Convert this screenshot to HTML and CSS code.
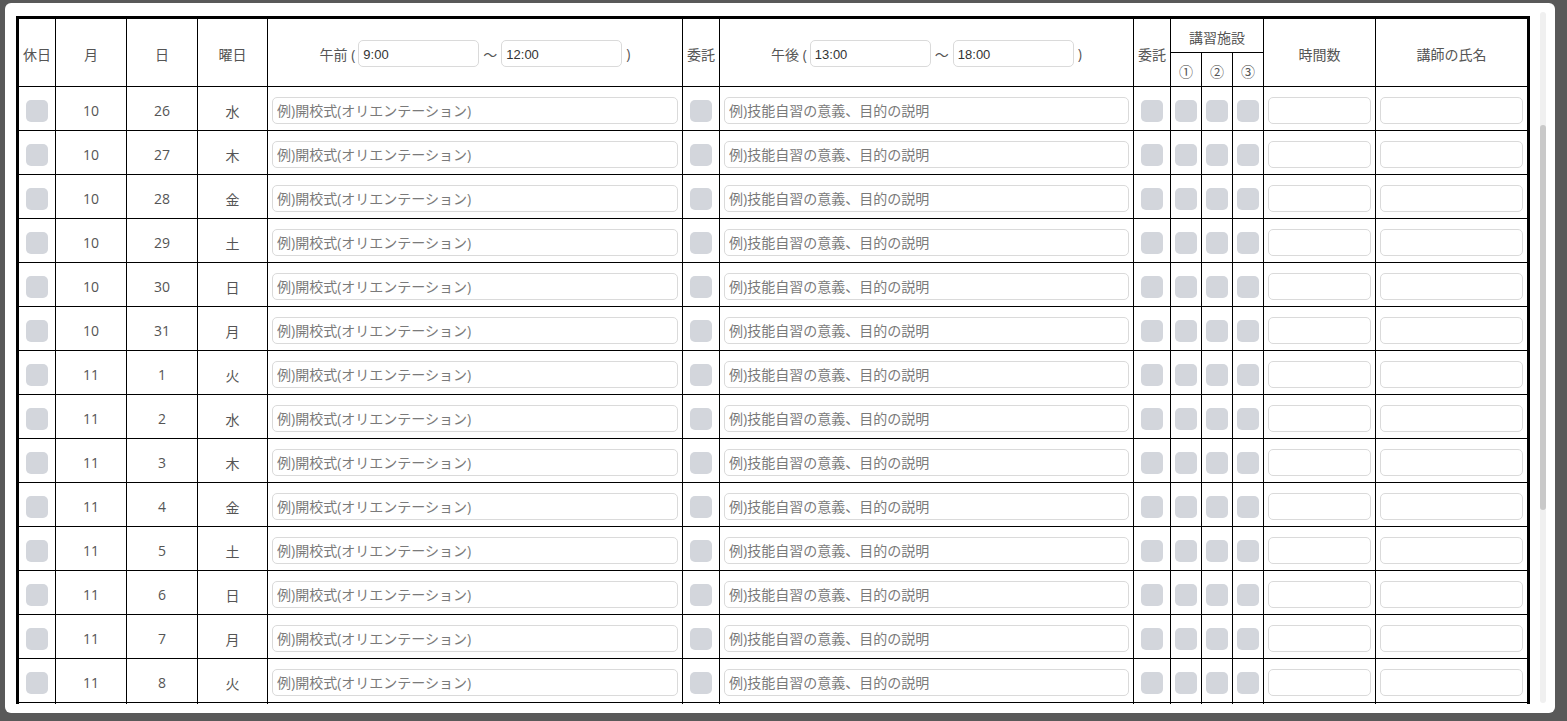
FILE: index.html
```html
<!DOCTYPE html>
<html lang="ja">
<head>
<meta charset="utf-8">
<title>講習計画表</title>
<link rel="stylesheet" href="styles.css">
</head>
<body>
<div class="card">
  <div class="viewport">
    <div class="sheet">
      <div class="th tall">休日</div>
      <div class="th tall">月</div>
      <div class="th tall">日</div>
      <div class="th tall">曜日</div>
      <div class="th tall time">午前 (<input class="tin first" value="9:00">～<input class="tin" value="12:00"><span class="close">)</span></div>
      <div class="th tall">委託</div>
      <div class="th tall time">午後 (<input class="tin first" value="13:00">～<input class="tin" value="18:00"><span class="close">)</span></div>
      <div class="th tall">委託</div>
      <div class="th wide">講習施設</div>
      <div class="th tall">時間数</div>
      <div class="th tall last">講師の氏名</div>
      <div class="th sub">①</div>
      <div class="th sub">②</div>
      <div class="th sub">③</div>

      <div class="td"><span class="cb"></span></div><div class="td">10</div><div class="td">26</div><div class="td">水</div><div class="td in"><input class="ph" placeholder="例)開校式(オリエンテーション)"></div><div class="td"><span class="cb"></span></div><div class="td in"><input class="ph" placeholder="例)技能自習の意義、目的の説明"></div><div class="td"><span class="cb"></span></div><div class="td"><span class="cb"></span></div><div class="td"><span class="cb"></span></div><div class="td"><span class="cb"></span></div><div class="td in"><input class="ph"></div><div class="td in last"><input class="ph"></div>

      <div class="td"><span class="cb"></span></div><div class="td">10</div><div class="td">27</div><div class="td">木</div><div class="td in"><input class="ph" placeholder="例)開校式(オリエンテーション)"></div><div class="td"><span class="cb"></span></div><div class="td in"><input class="ph" placeholder="例)技能自習の意義、目的の説明"></div><div class="td"><span class="cb"></span></div><div class="td"><span class="cb"></span></div><div class="td"><span class="cb"></span></div><div class="td"><span class="cb"></span></div><div class="td in"><input class="ph"></div><div class="td in last"><input class="ph"></div>

      <div class="td"><span class="cb"></span></div><div class="td">10</div><div class="td">28</div><div class="td">金</div><div class="td in"><input class="ph" placeholder="例)開校式(オリエンテーション)"></div><div class="td"><span class="cb"></span></div><div class="td in"><input class="ph" placeholder="例)技能自習の意義、目的の説明"></div><div class="td"><span class="cb"></span></div><div class="td"><span class="cb"></span></div><div class="td"><span class="cb"></span></div><div class="td"><span class="cb"></span></div><div class="td in"><input class="ph"></div><div class="td in last"><input class="ph"></div>

      <div class="td"><span class="cb"></span></div><div class="td">10</div><div class="td">29</div><div class="td">土</div><div class="td in"><input class="ph" placeholder="例)開校式(オリエンテーション)"></div><div class="td"><span class="cb"></span></div><div class="td in"><input class="ph" placeholder="例)技能自習の意義、目的の説明"></div><div class="td"><span class="cb"></span></div><div class="td"><span class="cb"></span></div><div class="td"><span class="cb"></span></div><div class="td"><span class="cb"></span></div><div class="td in"><input class="ph"></div><div class="td in last"><input class="ph"></div>

      <div class="td"><span class="cb"></span></div><div class="td">10</div><div class="td">30</div><div class="td">日</div><div class="td in"><input class="ph" placeholder="例)開校式(オリエンテーション)"></div><div class="td"><span class="cb"></span></div><div class="td in"><input class="ph" placeholder="例)技能自習の意義、目的の説明"></div><div class="td"><span class="cb"></span></div><div class="td"><span class="cb"></span></div><div class="td"><span class="cb"></span></div><div class="td"><span class="cb"></span></div><div class="td in"><input class="ph"></div><div class="td in last"><input class="ph"></div>

      <div class="td"><span class="cb"></span></div><div class="td">10</div><div class="td">31</div><div class="td">月</div><div class="td in"><input class="ph" placeholder="例)開校式(オリエンテーション)"></div><div class="td"><span class="cb"></span></div><div class="td in"><input class="ph" placeholder="例)技能自習の意義、目的の説明"></div><div class="td"><span class="cb"></span></div><div class="td"><span class="cb"></span></div><div class="td"><span class="cb"></span></div><div class="td"><span class="cb"></span></div><div class="td in"><input class="ph"></div><div class="td in last"><input class="ph"></div>

      <div class="td"><span class="cb"></span></div><div class="td">11</div><div class="td">1</div><div class="td">火</div><div class="td in"><input class="ph" placeholder="例)開校式(オリエンテーション)"></div><div class="td"><span class="cb"></span></div><div class="td in"><input class="ph" placeholder="例)技能自習の意義、目的の説明"></div><div class="td"><span class="cb"></span></div><div class="td"><span class="cb"></span></div><div class="td"><span class="cb"></span></div><div class="td"><span class="cb"></span></div><div class="td in"><input class="ph"></div><div class="td in last"><input class="ph"></div>

      <div class="td"><span class="cb"></span></div><div class="td">11</div><div class="td">2</div><div class="td">水</div><div class="td in"><input class="ph" placeholder="例)開校式(オリエンテーション)"></div><div class="td"><span class="cb"></span></div><div class="td in"><input class="ph" placeholder="例)技能自習の意義、目的の説明"></div><div class="td"><span class="cb"></span></div><div class="td"><span class="cb"></span></div><div class="td"><span class="cb"></span></div><div class="td"><span class="cb"></span></div><div class="td in"><input class="ph"></div><div class="td in last"><input class="ph"></div>

      <div class="td"><span class="cb"></span></div><div class="td">11</div><div class="td">3</div><div class="td">木</div><div class="td in"><input class="ph" placeholder="例)開校式(オリエンテーション)"></div><div class="td"><span class="cb"></span></div><div class="td in"><input class="ph" placeholder="例)技能自習の意義、目的の説明"></div><div class="td"><span class="cb"></span></div><div class="td"><span class="cb"></span></div><div class="td"><span class="cb"></span></div><div class="td"><span class="cb"></span></div><div class="td in"><input class="ph"></div><div class="td in last"><input class="ph"></div>

      <div class="td"><span class="cb"></span></div><div class="td">11</div><div class="td">4</div><div class="td">金</div><div class="td in"><input class="ph" placeholder="例)開校式(オリエンテーション)"></div><div class="td"><span class="cb"></span></div><div class="td in"><input class="ph" placeholder="例)技能自習の意義、目的の説明"></div><div class="td"><span class="cb"></span></div><div class="td"><span class="cb"></span></div><div class="td"><span class="cb"></span></div><div class="td"><span class="cb"></span></div><div class="td in"><input class="ph"></div><div class="td in last"><input class="ph"></div>

      <div class="td"><span class="cb"></span></div><div class="td">11</div><div class="td">5</div><div class="td">土</div><div class="td in"><input class="ph" placeholder="例)開校式(オリエンテーション)"></div><div class="td"><span class="cb"></span></div><div class="td in"><input class="ph" placeholder="例)技能自習の意義、目的の説明"></div><div class="td"><span class="cb"></span></div><div class="td"><span class="cb"></span></div><div class="td"><span class="cb"></span></div><div class="td"><span class="cb"></span></div><div class="td in"><input class="ph"></div><div class="td in last"><input class="ph"></div>

      <div class="td"><span class="cb"></span></div><div class="td">11</div><div class="td">6</div><div class="td">日</div><div class="td in"><input class="ph" placeholder="例)開校式(オリエンテーション)"></div><div class="td"><span class="cb"></span></div><div class="td in"><input class="ph" placeholder="例)技能自習の意義、目的の説明"></div><div class="td"><span class="cb"></span></div><div class="td"><span class="cb"></span></div><div class="td"><span class="cb"></span></div><div class="td"><span class="cb"></span></div><div class="td in"><input class="ph"></div><div class="td in last"><input class="ph"></div>

      <div class="td"><span class="cb"></span></div><div class="td">11</div><div class="td">7</div><div class="td">月</div><div class="td in"><input class="ph" placeholder="例)開校式(オリエンテーション)"></div><div class="td"><span class="cb"></span></div><div class="td in"><input class="ph" placeholder="例)技能自習の意義、目的の説明"></div><div class="td"><span class="cb"></span></div><div class="td"><span class="cb"></span></div><div class="td"><span class="cb"></span></div><div class="td"><span class="cb"></span></div><div class="td in"><input class="ph"></div><div class="td in last"><input class="ph"></div>

      <div class="td"><span class="cb"></span></div><div class="td">11</div><div class="td">8</div><div class="td">火</div><div class="td in"><input class="ph" placeholder="例)開校式(オリエンテーション)"></div><div class="td"><span class="cb"></span></div><div class="td in"><input class="ph" placeholder="例)技能自習の意義、目的の説明"></div><div class="td"><span class="cb"></span></div><div class="td"><span class="cb"></span></div><div class="td"><span class="cb"></span></div><div class="td"><span class="cb"></span></div><div class="td in"><input class="ph"></div><div class="td in last"><input class="ph"></div>

      <div class="td"></div><div class="td"></div><div class="td"></div><div class="td"></div><div class="td"></div><div class="td"></div><div class="td"></div><div class="td"></div><div class="td"></div><div class="td"></div><div class="td"></div><div class="td"></div><div class="td last"></div>
    </div>
  </div>
  <div class="scrollbar"><div class="thumb"></div></div>
</div>
</body>
</html>
```
FILE: styles.css
```css
html, body {
  margin: 0;
  padding: 0;
}
body {
  background: #595959;
  font-family: "Open Sans", "Noto Sans CJK JP", sans-serif;
  color: #555;
  height: 721px;
  overflow: hidden;
}
.card {
  margin: 3px 0 0 5px;
  width: 1550px;
  height: 710px;
  box-sizing: border-box;
  background: #fff;
  border-radius: 6px;
  padding: 9px 9px 9px 11px;
  display: flex;
  gap: 4px;
}
.viewport {
  width: 1520px;
  padding-top: 4px;
  overflow: hidden;
}
.scrollbar {
  width: 6px;
  height: 691px;
  background: #f0f0f0;
  border-radius: 3px;
}
.thumb {
  margin-top: 113px;
  height: 385px;
  background: #c9c9c9;
  border-radius: 3px;
}
.sheet {
  display: grid;
  grid-template-columns: 37px 71px 71px 70px 415px 37px 414px 37px 31px 31px 31px 112px 151px;
  grid-template-rows: 34px 34px;
  grid-auto-rows: 44px;
  width: max-content;
  border: 3px solid #000;
}
.th, .td {
  box-sizing: border-box;
  border-right: 1px solid #000;
  border-bottom: 1px solid #000;
  display: flex;
  align-items: center;
  justify-content: center;
  font-size: 14px;
  white-space: nowrap;
}
.th {
  padding-top: 2px;
}
.th.tall {
  grid-row: span 2;
}
.th.wide {
  grid-column: span 3;
}
.last {
  border-right: none !important;
}
.tin {
  box-sizing: border-box;
  width: 121px;
  height: 27px;
  border: 1px solid #dadada;
  border-radius: 5px;
  padding: 1px 4px 0;
  margin: 0 4px;
  font-family: "Liberation Sans", Arial, sans-serif;
  font-size: 13px;
  color: #333;
  outline: none;
}
.tin.first {
  margin-left: 3px;
}
.td {
  padding-top: 4px;
}
.td.in {
  padding: 4px 4px 0 4px;
}
.cb {
  display: block;
  width: 22px;
  height: 22px;
  border-radius: 5px;
  background: #d3d6dc;
}
.ph {
  box-sizing: border-box;
  width: 100%;
  height: 27px;
  border: 1px solid #dadada;
  border-radius: 5px;
  padding: 0 4px;
  font-family: "Open Sans", "Noto Sans CJK JP", sans-serif;
  font-size: 14px;
  color: #333;
  outline: none;
}
.ph::placeholder {
  color: #7a7a7a;
}
```
